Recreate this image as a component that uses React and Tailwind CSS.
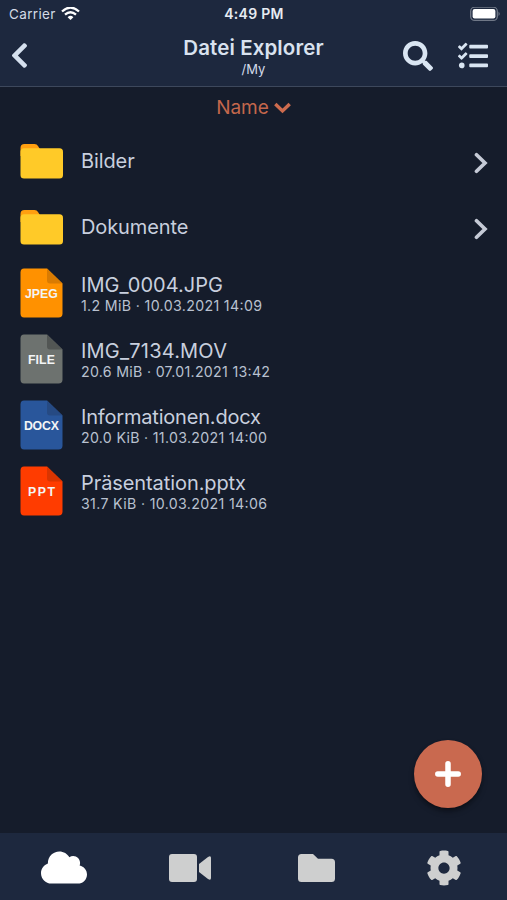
import { FaChevronLeft, FaSearch, FaTasks, FaCloud, FaCog } from 'react-icons/fa'

const FOLDERS = ['Bilder', 'Dokumente']

const FILES = [
  { name: 'IMG_0004.JPG', info: '1.2 MiB · 10.03.2021 14:09', type: 'JPEG', color: '#ff9100', fold: '#d97b02', nameWidth: 142, infoWidth: 181, typeWidth: 33 },
  { name: 'IMG_7134.MOV', info: '20.6 MiB · 07.01.2021 13:42', type: 'FILE', color: '#6d726f', fold: '#525654', nameWidth: 146, infoWidth: 189, typeWidth: 27 },
  { name: 'Informationen.docx', info: '20.0 KiB · 11.03.2021 14:00', type: 'DOCX', color: '#29569b', fold: '#264a83', nameWidth: 180, infoWidth: 186, typeWidth: 35 },
  { name: 'Präsentation.pptx', info: '31.7 KiB · 10.03.2021 14:06', type: 'PPT', color: '#ff3c00', fold: '#d93501', nameWidth: 165, infoWidth: 186, typeWidth: 27 }
]

// Single line of text set to a fixed advance width
function Label({ text, width, height, baseline, size, weight = 400, color }) {
  return (
    <svg width={width} height={height} className="block overflow-visible">
      <text x="0" y={baseline} textLength={width} fontSize={size} fontWeight={weight} fontFamily="Inter, sans-serif" fill={color}>
        {text}
      </text>
    </svg>
  )
}

function FolderIcon() {
  return (
    <svg width="43" height="35" viewBox="0 0 43 35">
      <path d="M.5 9V4Q.5 0 4.500 0H14.500Q17 0 18 2L20.500 6V12H.5Z" fill="#ff9f10" />
      <rect x=".5" y="4.300" width="42.500" height="30.200" rx="3.500" fill="#ffca28" />
    </svg>
  )
}

function FileIcon({ file }) {
  return (
    <svg width="43" height="50" viewBox="0 0 43 50">
      <path d="M4 .5H27L42.500 15.500V45.500Q42.500 49.500 38.500 49.500H4Q.5 49.500 .5 45.500V4.500Q.5 .5 4 .5Z" fill={file.color} />
      <path d="M27 .5L42.500 15.500H30Q27 15.500 27 12.500Z" fill={file.fold} />
      <text
        x={21.4 - file.typeWidth / 2}
        y="30"
        textLength={file.typeWidth}
        fontSize="12.3"
        fontWeight="700"
        fontFamily="'Liberation Sans', sans-serif"
        fill="#f3f5f6"
      >
        {file.type}
      </text>
    </svg>
  )
}

function Header() {
  return (
    <header className="h-[87px] border-b border-[#3d485c] bg-[#1d283e]">
      <div className="h-7 grid grid-cols-3 items-center pl-[9px] pr-[6px]">
        <div className="flex items-center gap-[5px]">
          <span className="text-[13.5px] leading-5 tracking-[0.35px] text-[#d3dae5]">Carrier</span>
          <svg width="19" height="14" viewBox="0 0 19 14" fill="none" stroke="#fff" strokeWidth="2.300">
            <path d="M1 4.500Q9.500 -3.300 18 4.500" />
            <path d="M4 7.700Q9.500 2.700 15 7.700" />
            <path d="M6.600 10.200Q9.500 7.500 12.400 10.200L9.500 13.100Z" fill="#fff" stroke="none" />
          </svg>
        </div>
        <span className="-ml-[2px] text-center text-[14px] leading-5 tracking-[0.3px] font-semibold text-[#e6ebf2]">4:49 PM</span>
        <svg className="justify-self-end" width="31" height="15" viewBox="0 0 31 15">
          <rect x=".7" y=".2" width="26.600" height="13.200" rx="4" fill="none" stroke="#707887" strokeWidth="1.300" />
          <rect x="2.600" y="2.100" width="22.800" height="9.400" rx="2" fill="#fff" />
          <path d="M28.500 4.500Q31 6.800 28.500 9.100Z" fill="#707887" />
        </svg>
      </div>
      <div className="h-[58px] grid grid-cols-[120px_1fr_120px]">
        <button className="flex items-center pl-[5px] pb-[3px]">
          <FaChevronLeft className="w-[29px] h-[29px] text-[#d5e0ee]" />
        </button>
        <div className="flex flex-col items-center pt-2">
          <h1 className="text-[20.5px] leading-6 tracking-[0.1px] font-semibold text-[#d9e2ef]">Datei Explorer</h1>
          <p className="text-[13px] leading-[18px] text-[#d3dcea]">/My</p>
        </div>
        <div className="flex items-center justify-end gap-[25px] pr-[19px] pb-[3px] text-[#d9e5f2]">
          <FaSearch className="w-[30px] h-[30px]" />
          <FaTasks className="w-[30px] h-[30px]" />
        </div>
      </div>
    </header>
  )
}

export default function App() {
  return (
    <div className="h-[900px] w-full flex flex-col overflow-hidden bg-[#151c2b] font-['Inter',sans-serif]">
      <Header />

      <main className="relative flex-1">
        <button className="w-full h-[41px] flex items-center justify-center gap-[5px] text-[#c4674c]">
          <span className="text-[19px] leading-6">Name</span>
          <svg width="17" height="12" viewBox="0 0 17 12" fill="none" stroke="#cd6b4e" strokeWidth="3.400">
            <path d="M1.300 2L8.500 9L15.700 2" />
          </svg>
        </button>

        <ul>
          {FOLDERS.map((name) => (
            <li key={name} className="h-[66px] flex items-center gap-[18px] pl-5 pr-[19px]">
              <FolderIcon />
              <span className="flex-1 text-[20px] leading-6 tracking-[-0.1px] text-[#c8cfde]">{name}</span>
              <svg className="mt-1" width="14" height="22" viewBox="0 0 14 22" fill="none" stroke="#c5cad6" strokeWidth="3.700" strokeLinecap="round">
                <path d="M2.500 2.700L11 11L2.500 19.300" />
              </svg>
            </li>
          ))}
          {FILES.map((file) => (
            <li key={file.name} className="h-[66px] flex items-center gap-[18px] pl-5">
              <FileIcon file={file} />
              <div className="pt-1">
                <Label text={file.name} width={file.nameWidth} height={24} baseline={19} size={20} color="#c8cfde" />
                <Label text={file.info} width={file.infoWidth} height={20} baseline={13.5} size={14.2} color="#b9c1d0" />
              </div>
            </li>
          ))}
        </ul>

        <button className="absolute right-[25px] bottom-[25px] w-[68px] h-[68px] rounded-full bg-[#c9694f] shadow-md shadow-black/40 flex items-center justify-center">
          <svg width="26" height="26" viewBox="0 0 26 26" stroke="#fff" strokeWidth="5.500" strokeLinecap="round">
            <path d="M13 2.800V23.200M2.800 13H23.200" />
          </svg>
        </button>
      </main>

      <nav className="h-[67px] grid grid-cols-4 items-center justify-items-center pt-0.5 bg-[#1d283e] text-[#cecfcf]">
        <FaCloud className="ml-px w-[46px] h-[37px] text-white" />
        <svg width="42" height="28" viewBox="0 0 42 28" fill="currentColor">
          <rect width="28" height="28" rx="3" />
          <path d="M30 10L39 3Q42 1 42 4V24Q42 27 39 25L30 18Z" />
        </svg>
        <svg width="37" height="28" viewBox="0 0 37 28" fill="currentColor">
          <path d="M3.500 0H15L20 4.700H33.500Q37 4.700 37 8.200V24.500Q37 28 33.500 28H3.500Q0 28 0 24.500V3.500Q0 0 3.500 0Z" />
        </svg>
        <FaCog className="w-9 h-9" />
      </nav>
    </div>
  )
}
